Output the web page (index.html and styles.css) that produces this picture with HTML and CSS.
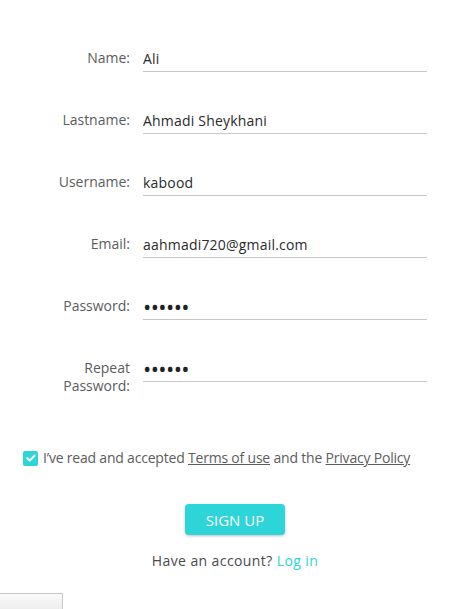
FILE: index.html
```html
<!DOCTYPE html>
<html lang="en">
<head>
<meta charset="utf-8">
<title>Sign up</title>
<link rel="stylesheet" href="styles.css">
</head>
<body>
<form class="signup">
  <div class="fields">
    <label class="label" for="name">Name:</label>
    <input class="field" id="name" type="text" value="Ali">
    <label class="label" for="lastname">Lastname:</label>
    <input class="field" id="lastname" type="text" value="Ahmadi Sheykhani">
    <label class="label" for="username">Username:</label>
    <input class="field" id="username" type="text" value="kabood">
    <label class="label" for="email">Email:</label>
    <input class="field" id="email" type="text" value="aahmadi720@gmail.com">
    <label class="label" for="password">Password:</label>
    <input class="field pass" id="password" type="password" value="123456">
    <label class="label" for="repeat">Repeat<br>Password:</label>
    <input class="field pass" id="repeat" type="password" value="123456">
  </div>
  <div class="terms">
    <span class="check"><svg width="10" height="8" viewBox="0 0 10 8"><path d="M1.3 4.2 L3.8 6.5 L8.7 1.5" fill="none" stroke="#fff" stroke-width="2" stroke-linecap="round" stroke-linejoin="round"/></svg></span>
    <span class="terms-text">I’ve read and accepted <a href="#" class="ul">Terms of use</a> and the <a href="#" class="ul">Privacy Policy</a></span>
  </div>
  <div class="actions">
    <button type="button" class="btn">SIGN UP</button>
    <p class="have">Have an account? <a href="#" class="login">Log in</a></p>
  </div>
  <div class="stub"></div>
</form>
</body>
</html>
```
FILE: styles.css
```css
html, body {
  margin: 0;
  padding: 0;
  background: #fff;
}
body {
  font-family: "Open Sans", "Liberation Sans", sans-serif;
  font-size: 14px;
  color: #555;
  overflow: hidden;
}
.signup {
  padding-top: 45px;
}
.fields {
  display: grid;
  grid-template-columns: 130px 284px;
  column-gap: 13px;
  row-gap: 35px;
  align-items: start;
}
.label {
  text-align: right;
  line-height: 18px;
  padding-top: 4px;
  color: #5c5c5c;
}
.field {
  box-sizing: border-box;
  height: 27px;
  border: none;
  border-bottom: 1px solid #c8c8c8;
  padding: 0;
  margin: 0;
  font-family: inherit;
  font-size: 14px;
  letter-spacing: 0.2px;
  color: #2a2a2a;
  background: transparent;
  outline: none;
}
.pass {
  font-size: 22px;
  letter-spacing: -0.6px;
  color: #222;
}
.terms {
  display: flex;
  align-items: center;
  gap: 5px;
  margin-top: 54px;
  padding-left: 23px;
}
.check {
  width: 15px;
  height: 15px;
  border-radius: 2px;
  background: #2dd4d8;
  display: flex;
  align-items: center;
  justify-content: center;
}
.terms-text {
  color: #5c5c5c;
  line-height: 18px;
  letter-spacing: -0.2px;
}
.ul {
  color: #5c5c5c;
  text-decoration: underline;
}
.actions {
  display: flex;
  flex-direction: column;
  align-items: center;
  padding-left: 10px;
  margin-top: 37px;
}
.btn {
  width: 100px;
  height: 31px;
  border: none;
  border-radius: 4px;
  background: #2dd4d8;
  color: #fff;
  font-family: inherit;
  font-size: 15px;
  box-shadow: 0 1px 3px rgba(0,0,0,0.25);
  padding: 0;
}
.have {
  margin: 17px 0 0;
  line-height: 18px;
  color: #4a4a4a;
  letter-spacing: 0.4px;
}
.login {
  color: #2dd4d8;
  text-decoration: none;
}
.stub {
  margin-top: 23px;
  width: 62px;
  height: 20px;
  border-top: 1px solid #c8c8c8;
  border-right: 1px solid #c8c8c8;
  background: linear-gradient(#fafafa, #e9e9e9);
}
```
